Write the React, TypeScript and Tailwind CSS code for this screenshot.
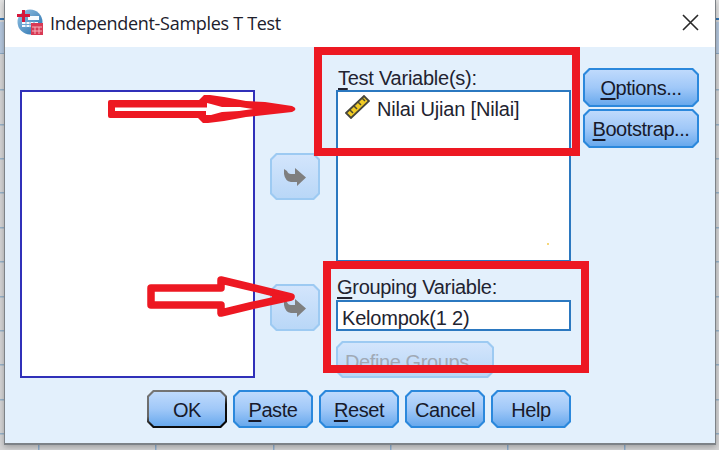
import React from "react";

const CHAMFER =
  "[clip-path:polygon(6px_0,calc(100%-6px)_0,100%_6px,100%_calc(100%-6px),calc(100%-6px)_100%,6px_100%,0_calc(100%-6px),0_6px)]";
const INNER =
  "[clip-path:polygon(5px_0,calc(100%-5px)_0,100%_5px,100%_calc(100%-5px),calc(100%-5px)_100%,5px_100%,0_calc(100%-5px),0_5px)]";

function Key({ children }: { children: string }) {
  return <span className="underline decoration-2 underline-offset-[3px] [text-decoration-skip-ink:none]">{children}</span>;
}

type ButtonProps = {
  children: React.ReactNode;
  size: string;
  variant?: "normal" | "primary" | "disabled";
  align?: string;
};

function Button({ children, size, variant = "normal", align = "justify-center" }: ButtonProps) {
  const edge =
    variant === "primary"
      ? "bg-[linear-gradient(165deg,#777_0%,#666_45%,#111_60%,#050505_100%)]"
      : variant === "disabled"
        ? "bg-[#9dcaf2]"
        : "bg-[#2b88dc]";
  const face =
    variant === "disabled"
      ? "bg-linear-to-b from-[#d3e5fc] to-[#b9d7f7] text-[#a0a9b5]"
      : "bg-linear-to-b from-[#bfdafc] via-[#a0c8f8] to-[#68a9ed] text-[#171a2b]";
  return (
    <button className={`block shrink-0 p-[2px] ${size} ${edge} ${CHAMFER}`}>
      <span className={`flex h-full w-full items-center whitespace-nowrap ${align} ${face} ${INNER}`}>{children}</span>
    </button>
  );
}

function MoveArrow() {
  return (
    <svg width="24" height="20" viewBox="0 0 24 20" fill="#7f7f7f">
      <path d="M1 2L4 4Q5 7 8 7H12V1L23 10.500L14 19V15H8Q2 14 1 7Z" />
    </svg>
  );
}

function AppIcon() {
  return (
    <svg width="27" height="27" viewBox="0 0 27 27">
      <defs>
        <linearGradient id="globe" x2="1" y2="1">
          <stop stopColor="#96c4e5" />
          <stop offset="1" stopColor="#246eac" />
        </linearGradient>
      </defs>
      <circle cx="13" cy="13" r="12.5" fill="url(#globe)" />
      <path d="M11 7H22V11H11zM5 13H21V18H5z" fill="#f6fbff" />
      <path d="M5 15.5H20M9 12V19M13 12V19M17 12V19" stroke="#6aa5d3" />
      <path d="M5 1H8V5H13V8H8V13H5V8H0V5H5Z" fill="#d6173b" />
      <path d="M14 14H26V26H14z" fill="#d83a55" />
      <path d="M15 18H25M15 22H25M18 18V25M22 18V25" stroke="#f5b2bd" />
    </svg>
  );
}

function Ruler() {
  return (
    <svg width="25" height="24" viewBox="0 0 25 24">
      <path d="M1 18L19 1L24 6L6 23Z" fill="#f1cb24" stroke="#45453c" strokeWidth="1.8" />
      <path d="M5 15L8 18M9 11L12 14M13 7L16 10M17 3L20 6" stroke="#4c4931" strokeWidth="1.5" />
    </svg>
  );
}

const gridRows = [89, 124, 158, 192, 227, 261, 296, 330, 364, 399, 433];
const gridColumns = [38, 155, 273, 390, 507, 624];

function DataSheet() {
  return (
    <svg className="block" width="719" height="450">
      <rect width="719" height="450" fill="#d5d5d6" />
      <rect width="719" height="18" fill="#e2e2e2" />
      <rect y="18" width="719" height="2" fill="#3376b5" />
      <rect y="22" width="719" height="32" fill="#b5c8df" />
      <rect y="53" width="719" height="1" fill="#8daac4" />
      {gridRows.map((y) => <rect key={y} y={y} width="719" height="1.5" fill="#98b3ca" />)}
      {gridColumns.map((x) => <rect key={x} x={x} y="22" width="1.5" height="428" fill="#8fafcf" />)}
    </svg>
  );
}

export default function App() {
  return (
    <div className="relative h-[450px] w-[719px] overflow-hidden font-['Liberation_Sans',sans-serif] text-[20px] leading-[24px] tracking-[-0.25px] text-[#222330]">
      <DataSheet />
      <section className="absolute top-0 left-[4px] flex h-[445px] w-[712px] flex-col border-x border-b-2 border-[#7d8287] bg-[#e3f0fc] shadow-[0_2px_6px_#0004]">
        <header className="flex h-[47px] shrink-0 items-center bg-white pr-[16px] pl-[12px]">
          <div className="-mt-[3px]"><AppIcon /></div>
          <h1 className="-mt-px ml-[6px] font-['Open_Sans',sans-serif] text-[18px] tracking-[-0.3px] whitespace-nowrap text-[#20202c]">Independent-Samples T Test</h1>
          <svg className="-mt-[3px] ml-auto" width="17" height="17" viewBox="0 0 17 17" stroke="#292929" strokeWidth="1.6">
            <path d="M1 1L16 16M16 1L1 16" />
          </svg>
        </header>
        <main className="flex h-[343px] shrink-0 pl-[15px]">
          <div className="mt-[43px] h-[288px] w-[235px] border-2 border-[#3030b9] bg-white" />
          <div className="ml-[15px] flex w-[50px] flex-col gap-[84px] pt-[106px]">
            <Button size="h-[47px] w-[50px]" variant="disabled"><MoveArrow /></Button>
            <Button size="h-[47px] w-[50px]" variant="disabled"><MoveArrow /></Button>
          </div>
          <div className="ml-[16px] w-[235px] pt-[19px]">
            <div className="h-[24px] pl-[2px] whitespace-nowrap"><Key>T</Key>est Variable(s):</div>
            <div className="h-[172px] border-2 border-[#2b78c0] bg-white">
              <div className="flex items-start pt-[3px] pl-[7px]">
                <Ruler /><span className="ml-[7px] pt-[2px] tracking-[-0.17px] whitespace-nowrap">Nilai Ujian [Nilai]</span>
              </div>
            </div>
            <div className="mt-[13px] h-[25px] pl-px tracking-[-0.3px] whitespace-nowrap"><Key>G</Key>rouping Variable:</div>
            <div className="flex h-[31px] items-center border-2 border-[#2b78c0] bg-white pt-[5px] pl-[4px] tracking-[-0.2px] whitespace-nowrap">Kelompok(1 2)</div>
            <div className="mt-[10px]">
              <Button size="h-[37px] w-[158px]" variant="disabled" align="pl-[7px] pt-[4px] tracking-[-0.4px]">Define Groups...</Button>
            </div>
          </div>
          <div className="ml-[12px] flex flex-col gap-[2px] pt-[21px] tracking-[-0.45px]">
            <Button size="h-[39px] w-[116px]"><span className="pt-px"><Key>O</Key>ptions...</span></Button>
            <Button size="h-[39px] w-[116px]"><span className="pt-px"><Key>B</Key>ootstrap...</span></Button>
          </div>
        </main>
        <footer className="flex gap-[6px] pl-[142px] tracking-[-0.4px]">
          <Button size="h-[38px] w-[80px]" variant="primary"><span className="pt-[2px]">OK</span></Button>
          <Button size="h-[38px] w-[80px]"><span className="pt-[2px]"><Key>P</Key>aste</span></Button>
          <Button size="h-[38px] w-[80px]"><span className="pt-[2px]"><Key>R</Key>eset</span></Button>
          <Button size="h-[38px] w-[80px]"><span className="pt-[2px]">Cancel</span></Button>
          <Button size="h-[38px] w-[80px]"><span className="pt-[2px]">Help</span></Button>
        </footer>
      </section>
      <div className="absolute top-[47px] left-[314px] h-[109px] w-[266px] border-8 border-[#ed1822]" />
      <div className="absolute top-[261px] left-[323px] h-[112px] w-[266px] border-8 border-[#ed1822]" />
      <div className="absolute top-[243px] left-[547px] h-[2px] w-[2px] bg-[#f6d77a]" />
      <svg className="absolute top-0 left-0" width="719" height="450" fill="none">
        <path
          fill="#ed1822"
          fillRule="evenodd"
          d="M110 100H199L204 95H210L224 97L246 101L265 102L292 106Q299 109 292 112L265 115L246 117L224 121L208 123H203L198 118H110Q108 118 108 116V102Q108 100 110 100Z M115 107.500V111H206V115H211L222 112L239 111L253 109L240 107L222 107L211 104L207 103V107.500Z"
        />
        <path d="M151 288H221V280L246 286L291 297L254 305L221 313V305H151Z" stroke="#ed1822" strokeWidth="7.5" strokeLinejoin="round" />
        <path d="M272 293L291 297L272 301Z" fill="#ed1822" />
      </svg>
    </div>
  );
}
